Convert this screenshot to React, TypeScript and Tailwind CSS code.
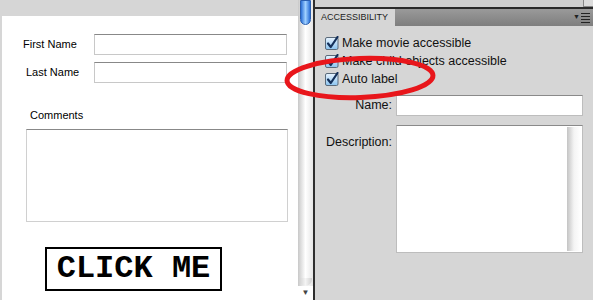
function Check() {
  return (
    <svg width="14" height="14" viewBox="0 0 14 14" className="shrink-0">
      <defs>
        <linearGradient id="cb" x1="0" y1="0" x2="0" y2="1">
          <stop offset="0" stopColor="#e8f4ff" />
          <stop offset="1" stopColor="#8cc4f0" />
        </linearGradient>
      </defs>
      <rect x="0.5" y="1.5" width="12.5" height="12" rx="1.5" fill="url(#cb)" stroke="#5a6a7a" />
      <path d="M3 7.5 L5.8 11 L12.5 1" fill="none" stroke="#14305a" strokeWidth="2.2" strokeLinecap="round" strokeLinejoin="round" />
    </svg>
  )
}

function CheckRow({ label }: { label: string }) {
  return (
    <div className="flex items-center gap-[3px] h-[18px]">
      <Check />
      <span className="text-[12.5px] text-[#111]">{label}</span>
    </div>
  )
}

export default function App() {
  return (
    <div
      className="relative flex w-[593px] h-[300px] overflow-hidden bg-[#d6d6d6]"
      style={{ fontFamily: '"Liberation Sans", Arial, sans-serif' }}
    >
      {/* Left: form stage */}
      <div className="flex flex-col w-[298px] shrink-0">
        <div className="h-[16px] bg-[#d6d6d6]" />
        <div className="flex-1 ml-[2px] bg-white relative">
          <div className="flex items-center h-[21px] mt-[18px]">
            <span className="w-[92px] pl-[21px] text-[11px] text-black">First Name</span>
            <div className="w-[193px] h-[21px] border border-[#c8c8c8] border-t-[#888]" />
          </div>
          <div className="flex items-center h-[21px] mt-[7px]">
            <span className="w-[92px] pl-[24px] text-[11px] text-black">Last Name</span>
            <div className="w-[193px] h-[21px] border border-[#c8c8c8] border-t-[#888]" />
          </div>
          <div className="pl-[28px] mt-[26px] text-[11px] text-black leading-[13px]">Comments</div>
          <div className="ml-[24px] mt-[7px] w-[262px] h-[93px] border border-[#d0d0d0] border-t-[#888]" />
          <div className="ml-[43px] mt-[25px] w-[177px] h-[44px] border-2 border-black flex items-center justify-center">
            <span
              className="text-[32px] font-bold text-black leading-none"
              style={{ fontFamily: '"Liberation Mono", "Courier New", monospace' }}
            >
              CLICK ME
            </span>
          </div>
        </div>
      </div>

      {/* Scrollbar */}
      <div className="w-[15px] shrink-0 flex flex-col bg-gradient-to-r from-[#c8c8c8] via-white to-[#e6e6e6]">
        <div className="h-[25px] mx-[2px] rounded-b-full bg-gradient-to-r from-[#2a6fd6] via-[#9fd0ff] to-[#2a6fd6] border border-[#2a5fb0]" />
        <div className="flex-1" />
        <div className="h-[8px] mx-[1px] rounded-b-full bg-gradient-to-r from-[#d0d0d0] via-[#f4f4f4] to-[#d0d0d0]" />
        <div className="h-[14px] flex items-center justify-center text-[8px] text-[#444] bg-white">▼</div>
      </div>
      <div className="w-[2px] shrink-0 bg-[#2e2e2e]" />

      {/* Right: accessibility panel */}
      <div className="flex-1 flex flex-col bg-[#d6d6d6]">
        <div className="h-[7px] flex bg-[#d0d0d0]">
          <div className="flex-1" />
          <div className="w-[10px] border-l border-b border-[#888] bg-[#dcdcdc]" />
        </div>
        <div className="h-[2px] bg-[#2a2a2a]" />
        <div className="h-[17px] flex items-end bg-gradient-to-b from-[#9a9a9a] to-[#7e7e7e]">
          <div className="w-[80px] h-[17px] bg-[#d6d6d6] flex items-center pl-[6px] text-[9px] text-[#222] whitespace-nowrap">
            ACCESSIBILITY
          </div>
          <div className="flex-1" />
          <div className="flex items-center gap-[1px] pr-[3px] h-full">
            <span className="text-[7px] text-[#222]">▼</span>
            <div className="flex flex-col gap-[2px] w-[9px]">
              <div className="h-[1px] bg-[#222]" />
              <div className="h-[1px] bg-[#222]" />
              <div className="h-[1px] bg-[#222]" />
              <div className="h-[1px] bg-[#222]" />
            </div>
          </div>
        </div>
        <div className="pl-[10px] pt-[8px] flex flex-col">
          <CheckRow label="Make movie accessible" />
          <CheckRow label="Make child objects accessible" />
          <CheckRow label="Auto label" />
        </div>
        <div className="flex items-center mt-[7px]">
          <span className="w-[79px] text-right pr-[2px] text-[12.5px] text-[#111]">Name:</span>
          <div className="ml-[2px] w-[187px] h-[21px] bg-white border border-[#bdbdbd] border-t-[#8a8a8a]" />
        </div>
        <div className="flex items-start mt-[9px]">
          <span className="w-[79px] text-right pr-[2px] pt-[8px] text-[12.5px] text-[#111]">Description:</span>
          <div className="ml-[2px] w-[187px] h-[128px] bg-white border border-[#bdbdbd] border-t-[#8a8a8a] flex justify-end p-[1px]">
            <div className="w-[14px] h-full bg-gradient-to-r from-[#c4c4c4] via-[#f4f4f4] to-white" />
          </div>
        </div>
      </div>

      {/* Red annotation ellipse */}
      <svg className="absolute left-[281px] top-[52px] pointer-events-none" width="162" height="52" viewBox="0 0 162 52">
        <ellipse cx="79" cy="26" rx="73" ry="19.5" fill="none" stroke="#e8161b" strokeWidth="5" transform="rotate(-2 79 26)" />
      </svg>
    </div>
  )
}
